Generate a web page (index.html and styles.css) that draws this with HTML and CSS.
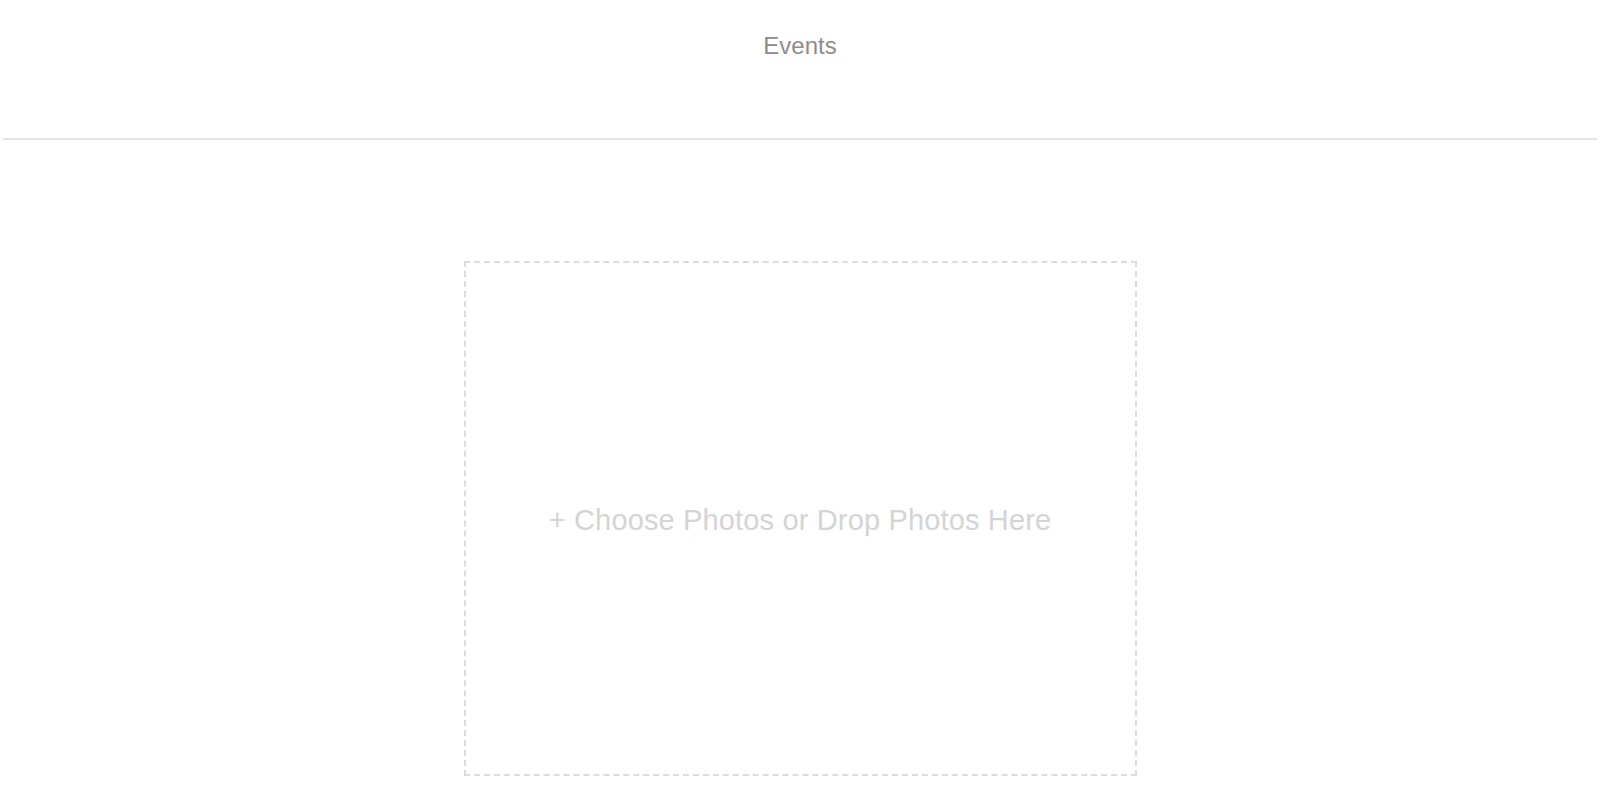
FILE: index.html
```html
<!DOCTYPE html>
<html lang="en">
<head>
    <meta charset="UTF-8">
    <title>Events</title>
    <link rel="stylesheet" href="styles.css">
</head>
<body>
<div class="header">
    <div class="title">Events</div>
</div>
<div class="divider"></div>

<div class="content">
    <div class="dropzone">
        <span class="dropzone-text">+ Choose Photos or Drop Photos Here</span>
    </div>
</div>
</body>
</html>
```

FILE: styles.css
```css
body {
    margin: 0;
    background: #fff;
    font-family: "Liberation Sans", Arial, sans-serif;
}

.header {
    height: 138px;
    box-sizing: border-box;
    padding-top: 31px;
    text-align: center;
}

.title {
    font-size: 24px;
    line-height: 30px;
    color: #8c8c8c;
}

.divider {
    height: 2px;
    margin: 0 3px;
    background: #e3e3e3;
}

.content {
    padding-top: 121px;
}

.dropzone {
    width: 673px;
    height: 515px;
    box-sizing: border-box;
    margin: 0 auto;
    border: 2px dashed #dcdcdc;
    display: flex;
    align-items: center;
    justify-content: center;
}

.dropzone-text {
    font-size: 29px;
    color: #d4d4d4;
    letter-spacing: 0.15px;
    margin-top: 4px;
}
```
